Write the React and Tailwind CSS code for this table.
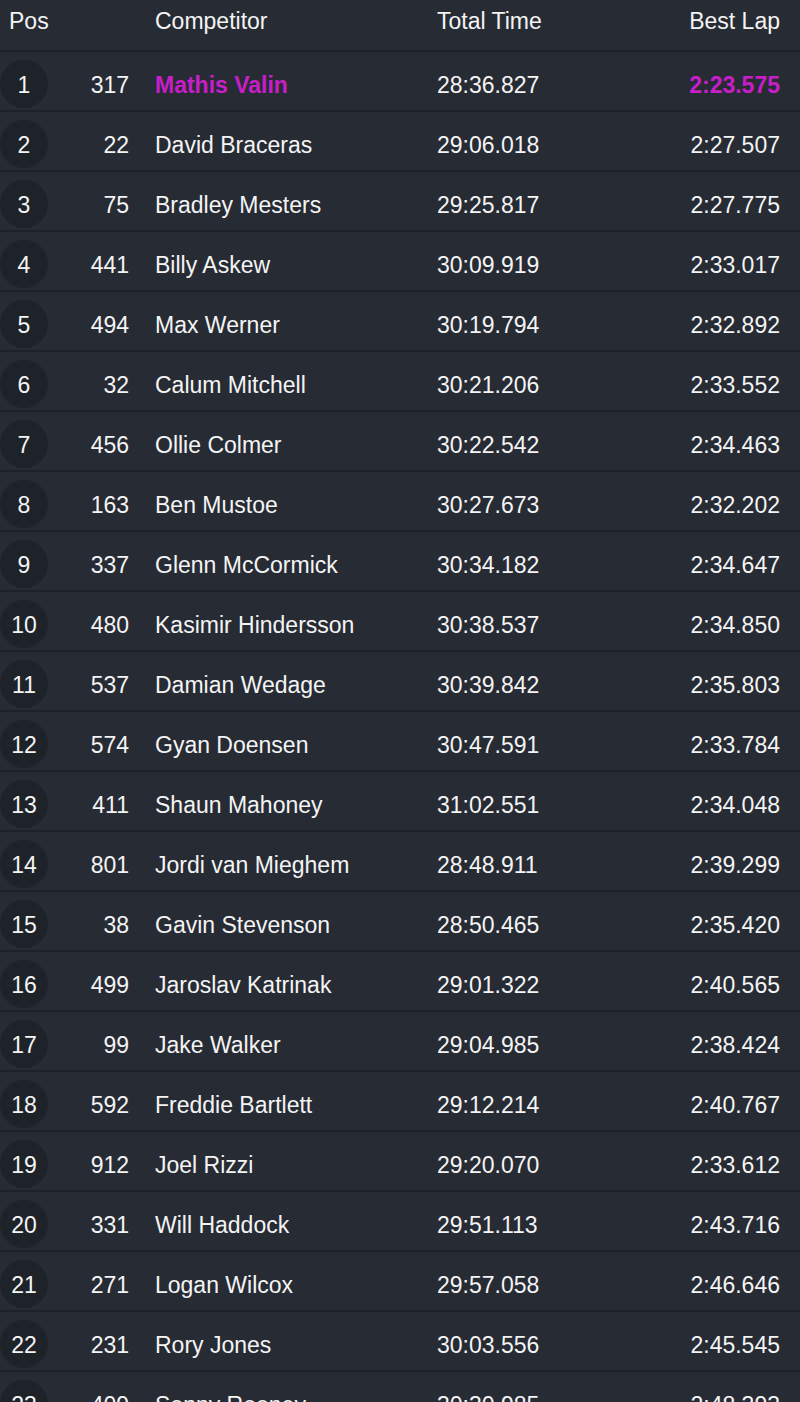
import React from "react";

const rows = [
  [1, 317, "Mathis Valin", "28:36.827", "2:23.575"],
  [2, 22, "David Braceras", "29:06.018", "2:27.507"],
  [3, 75, "Bradley Mesters", "29:25.817", "2:27.775"],
  [4, 441, "Billy Askew", "30:09.919", "2:33.017"],
  [5, 494, "Max Werner", "30:19.794", "2:32.892"],
  [6, 32, "Calum Mitchell", "30:21.206", "2:33.552"],
  [7, 456, "Ollie Colmer", "30:22.542", "2:34.463"],
  [8, 163, "Ben Mustoe", "30:27.673", "2:32.202"],
  [9, 337, "Glenn McCormick", "30:34.182", "2:34.647"],
  [10, 480, "Kasimir Hindersson", "30:38.537", "2:34.850"],
  [11, 537, "Damian Wedage", "30:39.842", "2:35.803"],
  [12, 574, "Gyan Doensen", "30:47.591", "2:33.784"],
  [13, 411, "Shaun Mahoney", "31:02.551", "2:34.048"],
  [14, 801, "Jordi van Mieghem", "28:48.911", "2:39.299"],
  [15, 38, "Gavin Stevenson", "28:50.465", "2:35.420"],
  [16, 499, "Jaroslav Katrinak", "29:01.322", "2:40.565"],
  [17, 99, "Jake Walker", "29:04.985", "2:38.424"],
  [18, 592, "Freddie Bartlett", "29:12.214", "2:40.767"],
  [19, 912, "Joel Rizzi", "29:20.070", "2:33.612"],
  [20, 331, "Will Haddock", "29:51.113", "2:43.716"],
  [21, 271, "Logan Wilcox", "29:57.058", "2:46.646"],
  [22, 231, "Rory Jones", "30:03.556", "2:45.545"],
  [23, 409, "Sonny Rooney", "30:30.985", "2:48.393"],
];

export default function App() {
  return (
    <div
      className="w-[800px] h-[1402px] overflow-hidden bg-[#272b34] text-[#f4f4f4] text-[23px] leading-none"
      style={{ fontFamily: '"Liberation Sans", Arial, sans-serif' }}
    >
      <div className="flex items-center h-[52px] pb-[8px] border-b-2 border-[#1e2128]">
        <div className="w-[60px] pl-[9px]">Pos</div>
        <div className="w-[69px]"></div>
        <div className="w-[282px] ml-[26px]">Competitor</div>
        <div className="w-[180px]">Total Time</div>
        <div className="flex-1 text-right pr-[20px]">Best Lap</div>
      </div>
      {rows.map(([pos, num, name, total, best]) => {
        const first = pos === 1;
        return (
          <div
            key={pos}
            className="flex items-center h-[60px] pt-[5px] border-b-2 border-[#1e2128]"
          >
            <div className="w-[60px] flex">
              <div className="w-[48px] h-[48px] rounded-full bg-[#1e2229] flex items-center justify-center pt-[4px]">
                {pos}
              </div>
            </div>
            <div className="w-[69px] text-right pt-[3px]">{num}</div>
            <div
              className={
                "w-[282px] ml-[26px] pt-[3px] " +
                (first ? "text-[#c81ec8] font-bold" : "")
              }
            >
              {name}
            </div>
            <div className="w-[180px] pt-[3px]">{total}</div>
            <div
              className={
                "flex-1 text-right pr-[20px] pt-[3px] " +
                (first ? "text-[#c81ec8] font-bold" : "")
              }
            >
              {best}
            </div>
          </div>
        );
      })}
    </div>
  );
}
